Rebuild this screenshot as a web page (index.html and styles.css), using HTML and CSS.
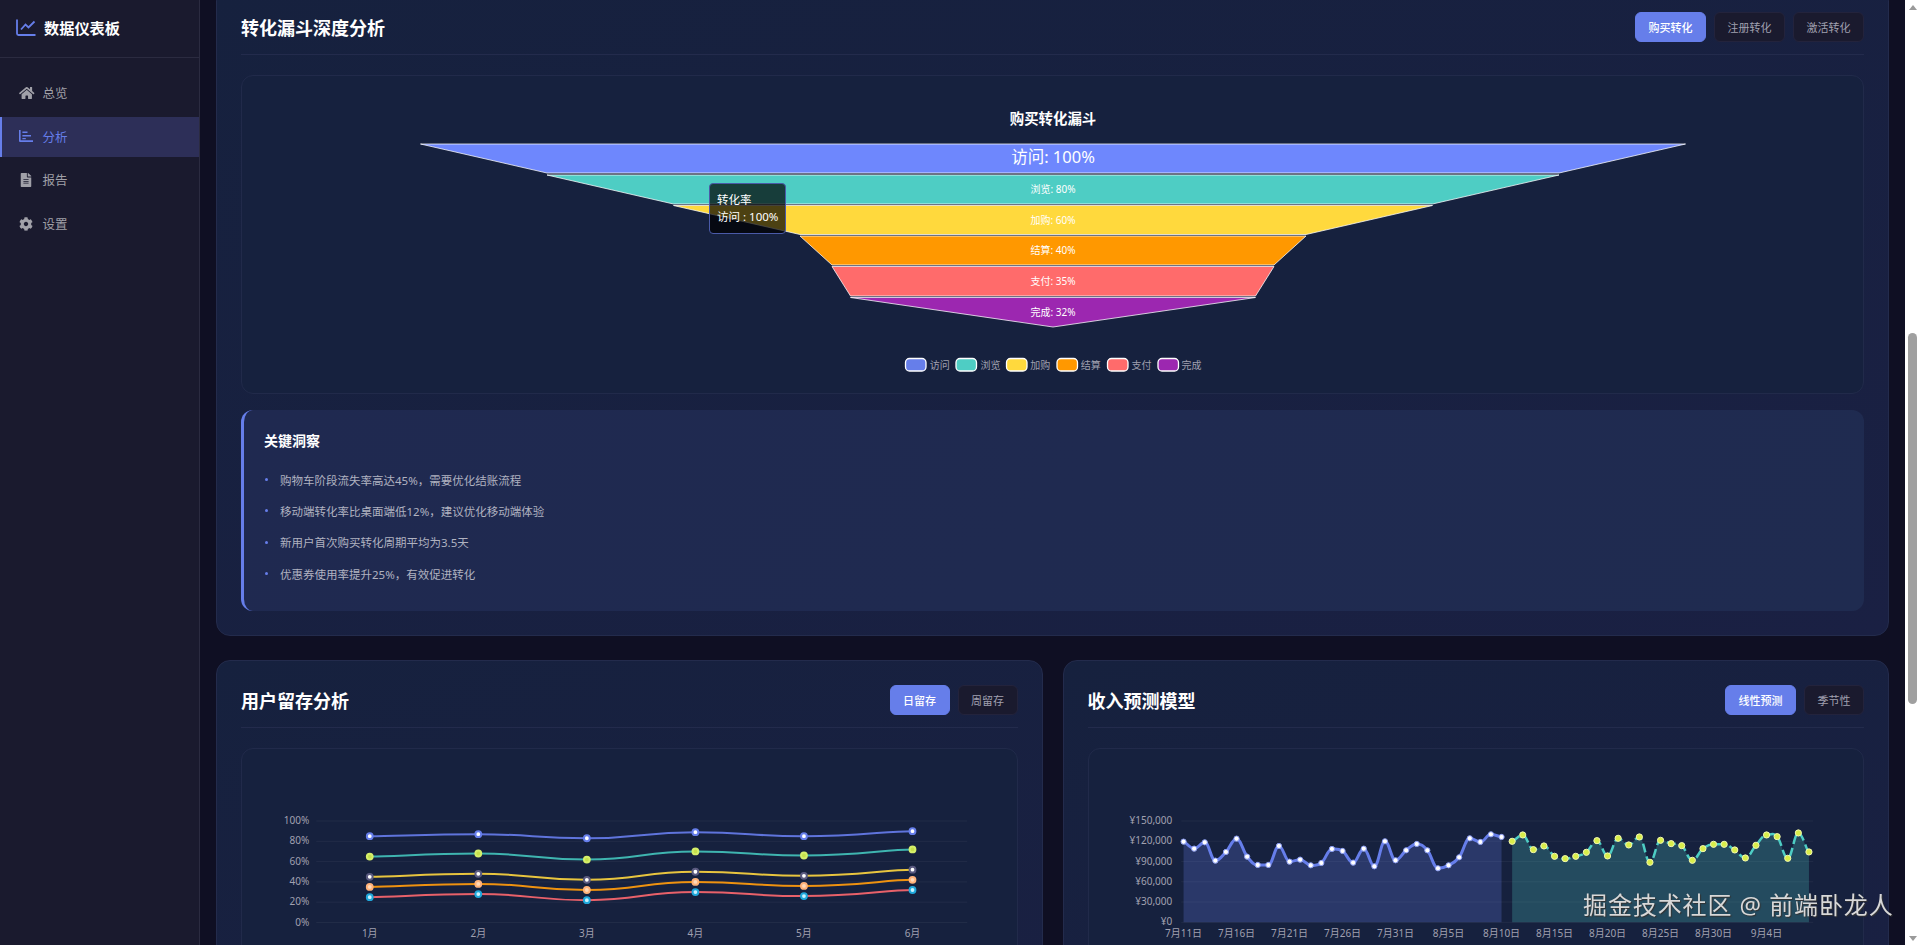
FILE: index.html
```html
<!DOCTYPE html>
<html lang="zh-CN">

<head>
    <meta charset="utf-8">
    <title>数据仪表板</title>
    <link rel="stylesheet" href="styles.css">
</head>

<body>
    <!-- Sidebar -->
    <aside class="sidebar">
        <div class="sidebar-header">
            <svg class="logo-icon" viewBox="0 0 20 17" width="20" height="17">
                <path d="M1 0.5V14.5Q1 16 2.5 16H19.5" />
                <path d="M5 10.5L9.5 5.5L12.5 8.5L18.5 2.5" />
            </svg>
            <span class="logo-text">数据仪表板</span>
        </div>
        <nav class="nav-list">
            <a class="nav-item">
                <svg class="nav-icon home" viewBox="0 0 576 512">
                    <path d="M280.37 148.26L96 300.11V464a16 16 0 0 0 16 16l112.06-.29a16 16 0 0 0 15.92-16V368a16 16 0 0 1 16-16h64a16 16 0 0 1 16 16v95.64a16 16 0 0 0 16 16.05L464 480a16 16 0 0 0 16-16V300L295.67 148.26a12.19 12.19 0 0 0-15.3 0zM571.6 251.47L488 182.56V44.05a12 12 0 0 0-12-12h-56a12 12 0 0 0-12 12v72.61L318.47 43a48 48 0 0 0-61 0L4.34 251.47a12 12 0 0 0-1.6 16.9l25.5 31A12 12 0 0 0 45.15 301l235.22-193.74a12.19 12.19 0 0 1 15.3 0L530.9 301a12 12 0 0 0 16.9-1.6l25.5-31a12 12 0 0 0-1.7-16.93z" />
                </svg>
                <span>总览</span>
            </a>
            <a class="nav-item active">
                <svg class="nav-icon" viewBox="0 0 14 12">
                    <path d="M0 0H1.6V10.2H14V12H1Q0 12 0 11Z" />
                    <path d="M3.4 1.6H8.5V3H3.4ZM3.4 5H12V6.4H3.4ZM3.4 8H6.8V9.2H3.4Z" />
                </svg>
                <span>分析</span>
            </a>
            <a class="nav-item">
                <svg class="nav-icon" viewBox="0 0 384 512">
                    <path d="M224 136V0H24C10.7 0 0 10.7 0 24v464c0 13.3 10.7 24 24 24h336c13.3 0 24-10.7 24-24V160H248c-13.2 0-24-10.8-24-24zm64 236c0 6.6-5.4 12-12 12H108c-6.6 0-12-5.4-12-12v-8c0-6.6 5.4-12 12-12h168c6.6 0 12 5.4 12 12v8zm0-64c0 6.6-5.4 12-12 12H108c-6.6 0-12-5.4-12-12v-8c0-6.6 5.4-12 12-12h168c6.6 0 12 5.4 12 12v8zm0-72v8c0 6.6-5.4 12-12 12H108c-6.6 0-12-5.4-12-12v-8c0-6.6 5.4-12 12-12h168c6.6 0 12 5.4 12 12zm96-114.1v6.1H256V0h6.1c6.4 0 12.5 2.5 17 7l97.9 98c4.5 4.5 7 10.6 7 16.9z" />
                </svg>
                <span>报告</span>
            </a>
            <a class="nav-item">
                <svg class="nav-icon" viewBox="0 0 512 512">
                    <path d="M487.4 315.7l-42.6-24.6c4.3-23.2 4.3-47 0-70.2l42.6-24.6c4.9-2.8 7.1-8.6 5.5-14-11.1-35.6-30-67.8-54.7-94.6-3.8-4.1-10-5.1-14.8-2.3L380.8 110c-17.9-15.4-38.5-27.3-60.8-35.1V25.8c0-5.6-3.9-10.5-9.4-11.7-36.7-8.2-74.3-7.8-109.2 0-5.5 1.2-9.4 6.1-9.4 11.7V75c-22.2 7.9-42.8 19.8-60.8 35.1L88.7 85.5c-4.9-2.8-11-1.9-14.8 2.3-24.7 26.7-43.6 58.9-54.7 94.6-1.7 5.4.6 11.2 5.5 14L67.3 221c-4.3 23.2-4.3 47 0 70.2l-42.6 24.6c-4.9 2.8-7.1 8.6-5.5 14 11.1 35.6 30 67.8 54.7 94.6 3.8 4.1 10 5.1 14.8 2.3l42.6-24.6c17.9 15.4 38.5 27.3 60.8 35.1v49.2c0 5.6 3.9 10.5 9.4 11.7 36.7 8.2 74.3 7.8 109.2 0 5.5-1.2 9.4-6.1 9.4-11.7v-49.2c22.2-7.9 42.8-19.8 60.8-35.1l42.6 24.6c4.9 2.8 11 1.9 14.8-2.3 24.7-26.7 43.6-58.9 54.7-94.6 1.5-5.5-.7-11.3-5.6-14.1zM256 336c-44.1 0-80-35.9-80-80s35.9-80 80-80 80 35.9 80 80-35.9 80-80 80z" />
                </svg>
                <span>设置</span>
            </a>
        </nav>
    </aside>

    <!-- Main content -->
    <main class="main">
        <div class="scroll-area">
            <section class="card">
                <div class="card-header">
                    <h2 class="card-title">转化漏斗深度分析</h2>
                    <div class="btn-group">
                        <button class="btn active">购买转化</button>
                        <button class="btn">注册转化</button>
                        <button class="btn">激活转化</button>
                    </div>
                </div>

                <div class="chart-box">
                    <svg class="chart-svg" viewBox="242 76 1620 317">
                        <text class="funnel-title" x="1052.5" y="118">购买转化漏斗</text>
                        <g class="funnel-rows">
                            <polygon fill="#6e87fd" points="420,144 1685,144 1558.5,173 546.5,173" />
                            <polygon fill="#4ecdc4" points="546.5,175 1558.5,175 1432,204 673,204" />
                            <polygon fill="#ffd93d" points="673,205.5 1432,205.5 1305.5,234.5 799.5,234.5" />
                            <polygon fill="#ff9800" points="799.5,236 1305.5,236 1273.5,265 831.5,265" />
                            <polygon fill="#ff6b6b" points="831.5,266.5 1273.5,266.5 1255,296 850,296" />
                            <polygon fill="#9c27b0" points="850,297.5 1255,297.5 1052.5,327" />
                        </g>
                        <g class="funnel-labels">
                            <text class="big" x="1052.5" y="156">访问: 100%</text>
                            <text x="1052.5" y="188.5">浏览: 80%</text>
                            <text x="1052.5" y="219.5">加购: 60%</text>
                            <text x="1052.5" y="250">结算: 40%</text>
                            <text x="1052.5" y="281">支付: 35%</text>
                            <text x="1052.5" y="311.5">完成: 32%</text>
                        </g>
                        <g class="legend">
                            <rect fill="#667eea" x="905" y="358.5" width="20.5" height="12.5" rx="4" />
                            <text x="929.3" y="365">访问</text>
                            <rect fill="#4ecdc4" x="955.5" y="358.5" width="20.5" height="12.5" rx="4" />
                            <text x="980" y="365">浏览</text>
                            <rect fill="#ffd93d" x="1006" y="358.5" width="20.5" height="12.5" rx="4" />
                            <text x="1029.7" y="365">加购</text>
                            <rect fill="#ff9800" x="1056.5" y="358.5" width="20.5" height="12.5" rx="4" />
                            <text x="1080.3" y="365">结算</text>
                            <rect fill="#ff6b6b" x="1107" y="358.5" width="20.5" height="12.5" rx="4" />
                            <text x="1131" y="365">支付</text>
                            <rect fill="#9c27b0" x="1157.5" y="358.5" width="20.5" height="12.5" rx="4" />
                            <text x="1181" y="365">完成</text>
                        </g>
                    </svg>
                    <div class="chart-tooltip">
                        <div>转化率</div>
                        <div>访问 : 100%</div>
                    </div>
                </div>

                <div class="insights">
                    <h4 class="insights-title">关键洞察</h4>
                    <ul class="insights-list">
                        <li>购物车阶段流失率高达45%，需要优化结账流程</li>
                        <li>移动端转化率比桌面端低12%，建议优化移动端体验</li>
                        <li>新用户首次购买转化周期平均为3.5天</li>
                        <li>优惠券使用率提升25%，有效促进转化</li>
                    </ul>
                </div>
            </section>

            <div class="card-row">
                <section class="card">
                    <div class="card-header">
                        <h2 class="card-title">用户留存分析</h2>
                        <div class="btn-group">
                            <button class="btn active">日留存</button>
                            <button class="btn">周留存</button>
                        </div>
                    </div>
                    <div class="chart-box">
                        <svg class="chart-svg" id="retention-chart" viewBox="242 749 774 317"></svg>
                    </div>
                </section>

                <section class="card">
                    <div class="card-header">
                        <h2 class="card-title">收入预测模型</h2>
                        <div class="btn-group">
                            <button class="btn active">线性预测</button>
                            <button class="btn">季节性</button>
                        </div>
                    </div>
                    <div class="chart-box">
                        <svg class="chart-svg" id="revenue-chart" viewBox="1088 749 774 317"></svg>
                    </div>
                </section>
            </div>
        </div>
    </main>

    <!-- Browser scrollbar, the page is photographed part way down -->
    <div class="scrollbar">
        <div class="scroll-arrow up"></div>
        <div class="scroll-thumb"></div>
        <div class="scroll-arrow down"></div>
    </div>

    <div class="watermark">掘金技术社区 @ 前端卧龙人</div>

    <script src="charts.js"></script>
</body>

</html>
```

FILE: styles.css
```css
* {
    box-sizing: border-box;
}

html,
body {
    margin: 0;
    height: 100%;
    overflow: hidden;
}

body {
    display: flex;
    background-color: #0f0f23;
    font-family: "Noto Sans", "Noto Sans CJK SC", sans-serif;
    color: #fff;
}

/* Sidebar */
.sidebar {
    flex: 0 0 200px;
    background-color: #1a1a2e;
    border-right: 1px solid #2b2b40;
}

.sidebar-header {
    display: flex;
    align-items: center;
    gap: 8px;
    height: 58px;
    padding-left: 16px;
    padding-bottom: 3px;
    border-bottom: 1px solid #2b2b40;
}

.logo-icon {
    fill: none;
    stroke: #667eea;
    stroke-width: 1.8;
}

.logo-text {
    font-size: 15.2px;
    font-weight: 700;
}

.nav-list {
    display: flex;
    flex-direction: column;
    gap: 3.7px;
    padding-top: 15px;
}

.nav-item {
    display: flex;
    align-items: center;
    height: 40px;
    padding-left: 19px;
    padding-bottom: 1px;
    font-size: 12.5px;
    color: #a0a0a8;
}

.nav-item.active {
    padding-left: 17px;
    border-left: 2px solid #667eea;
    background-color: #2d2f58;
    color: #667eea;
}

.nav-icon {
    flex: 0 0 14px;
    height: 14px;
    margin-right: 9.5px;
    fill: currentColor;
}

.nav-icon.home {
    flex-basis: 15.5px;
    margin-right: 8px;
}

/* Main area */
.main {
    flex: 1;
    min-width: 0;
    padding: 0 16px;
    overflow: hidden;
}

.scroll-area {
    margin-top: -13px;
}

.card {
    padding: 24px;
    border: 1px solid #232b4c;
    border-radius: 14px;
    background: linear-gradient(160deg, #16213e, #1a2043);
}

.card-row {
    display: grid;
    grid-template-columns: 1fr 1fr;
    gap: 20px;
    margin-top: 24px;
}

.card-header {
    display: flex;
    align-items: center;
    justify-content: space-between;
    padding-bottom: 12px;
    margin-bottom: 20px;
    border-bottom: 1px solid #232b4c;
}

.card-title {
    margin: 0;
    font-size: 18px;
    font-weight: 700;
}

.btn-group {
    display: flex;
    gap: 8px;
}

.btn {
    height: 30px;
    padding: 0 12.5px;
    border: 1px solid #23233c;
    border-radius: 6px;
    background-color: #1a1a2e;
    font-family: inherit;
    font-size: 11px;
    color: #a0a0b0;
}

.btn.active {
    border-color: #667eea;
    background-color: #667eea;
    font-weight: 500;
    color: #fff;
}

/* Chart panels */
.chart-box {
    position: relative;
    height: 319px;
    border: 1px solid #212a4a;
    border-radius: 12px;
    background-color: #16213e;
}

.chart-svg {
    display: block;
    width: 100%;
    height: 100%;
}

.chart-svg text {
    dominant-baseline: central;
}

.funnel-title {
    font-size: 14.4px;
    font-weight: 700;
    fill: #fff;
    text-anchor: middle;
}

.funnel-rows polygon {
    stroke: rgba(255, 255, 255, 0.75);
    stroke-width: 1;
}

.funnel-labels text {
    font-size: 10px;
    fill: #fff;
    text-anchor: middle;
}

.funnel-labels .big {
    font-size: 16.5px;
}

.legend rect {
    stroke: #fff;
    stroke-width: 1.3;
}

.legend text {
    font-size: 10px;
    fill: #a0a0b0;
}

.chart-tooltip {
    position: absolute;
    left: 467px;
    top: 107px;
    width: 77px;
    height: 51px;
    padding: 7px;
    border: 1px solid #4a5aa8;
    border-radius: 4px;
    background-color: rgba(0, 0, 0, 0.7);
    font-size: 11.5px;
    line-height: 17px;
    white-space: nowrap;
}

/* Drawn by charts.js */
.grid-line {
    stroke: rgba(255, 255, 255, 0.05);
    stroke-width: 1;
}

.axis-label {
    font-size: 10px;
    fill: #a0a0b0;
}

.axis-label.y {
    text-anchor: end;
}

.axis-label.x {
    text-anchor: middle;
}

.series-line {
    fill: none;
    stroke-width: 2;
}

/* Insights */
.insights {
    margin-top: 16px;
    padding: 20px 20px 21.5px;
    border-left: 3px solid #667eea;
    border-radius: 12px;
    background: linear-gradient(135deg, #1f2950, #1f2b50);
}

.insights-title {
    margin: 0 0 13px;
    font-size: 14px;
    font-weight: 700;
    line-height: 21px;
}

.insights-list {
    margin: 0;
    padding: 0;
    list-style: none;
}

.insights-list li {
    display: flex;
    align-items: center;
    height: 31.3px;
    font-size: 11.5px;
    color: #b0b2c0;
}

.insights-list li::before {
    content: "";
    flex: 0 0 3px;
    height: 3px;
    margin: 0 12px 0 1px;
    border-radius: 50%;
    background-color: #667eea;
}

/* Scrollbar */
.scrollbar {
    flex: 0 0 15px;
    display: flex;
    flex-direction: column;
    align-items: center;
    padding: 5px 0 4px;
    background-color: #fff;
}

.scroll-arrow {
    width: 0;
    height: 0;
    border-left: 4.5px solid transparent;
    border-right: 4.5px solid transparent;
}

.scroll-arrow.up {
    border-bottom: 5px solid #9a9a9a;
}

.scroll-arrow.down {
    margin-top: auto;
    border-top: 5px solid #9a9a9a;
}

.scroll-thumb {
    width: 9px;
    height: 371px;
    margin-top: 323px;
    border-radius: 5px;
    background-color: #a0a0a0;
}

.watermark {
    position: fixed;
    left: 1583px;
    top: 887px;
    font-size: 24px;
    line-height: 36px;
    letter-spacing: 0.9px;
    white-space: nowrap;
    color: #d8d8d8;
    text-shadow: 1px 1px 1px #333;
}
```

FILE: charts.js
```javascript
const SVG_NS = "http://www.w3.org/2000/svg";

function add(parent, tag, attrs, text) {
    const el = document.createElementNS(SVG_NS, tag);
    for (const key in attrs) {
        el.setAttribute(key, attrs[key]);
    }
    if (text) {
        el.textContent = text;
    }
    parent.appendChild(el);
    return el;
}

// Smooth line through the points, flat at local peaks like the chart library does
function smoothPath(points, smooth) {
    const tangents = points.map((p, i) => {
        const prev = points[Math.max(i - 1, 0)];
        const next = points[Math.min(i + 1, points.length - 1)];
        const flat = (p[1] - prev[1]) * (next[1] - p[1]) <= 0;
        return [(next[0] - prev[0]) * smooth, flat ? 0 : (next[1] - prev[1]) * smooth];
    });
    let d = "M" + points[0][0] + " " + points[0][1];
    for (let i = 1; i < points.length; i++) {
        const a = points[i - 1];
        const b = points[i];
        d += " C" + (a[0] + tangents[i - 1][0]) + " " + (a[1] + tangents[i - 1][1]) +
            " " + (b[0] - tangents[i][0]) + " " + (b[1] - tangents[i][1]) +
            " " + b[0] + " " + b[1];
    }
    return d;
}

// Retention chart
function drawRetention() {
    const svg = document.querySelector("#retention-chart");
    const y0 = 922.5;
    const unit = 1.015;
    const months = ["1月", "2月", "3月", "4月", "5月", "6月"];
    const series = [
        { line: "#5f74dc", ring: "#667eea", dot: "#fff", data: [85, 87, 83, 89, 85, 90] },
        { line: "#3fb5b0", ring: "#d5ef6a", dot: "#c6e04c", data: [65, 68, 62, 70, 66, 72] },
        { line: "#e8c53f", ring: "#5a5a80", dot: "#fff", data: [45, 48, 42, 50, 46, 52] },
        { line: "#ee9210", ring: "#ffb27a", dot: "#ffd9b8", data: [35, 38, 32, 40, 36, 42] },
        { line: "#e8616a", ring: "#1fa8dc", dot: "#c8f2ff", data: [25, 28, 22, 30, 26, 32] }
    ];

    for (let v = 0; v <= 100; v += 20) {
        const y = y0 - v * unit;
        add(svg, "line", { class: "grid-line", x1: 316, x2: 967, y1: y, y2: y });
        add(svg, "text", { class: "axis-label y", x: 309, y: y - 1 }, v + "%");
    }
    months.forEach((m, i) => {
        add(svg, "text", { class: "axis-label x", x: 369.5 + i * 108.55, y: 933 }, m);
    });
    series.forEach((s) => {
        const points = s.data.map((v, i) => [369.5 + i * 108.55, y0 - v * unit]);
        add(svg, "path", { class: "series-line", d: smoothPath(points, 0.25), stroke: s.line });
        points.forEach((p) => {
            add(svg, "circle", { cx: p[0], cy: p[1], r: 2.9, fill: s.dot, stroke: s.ring, "stroke-width": 2 });
        });
    });
}

// Revenue chart: actual values, then the forecast after the gap
function drawRevenue() {
    const svg = document.querySelector("#revenue-chart");
    const y0 = 922.3;
    const scale = 101.3 / 150000;
    const x0 = 1182.3;
    const step = 10.6;
    const actual = [119450, 109080, 118460, 91300, 104150, 123900, 97240, 84900, 84900, 113030,
        89800, 92800, 84400, 87860, 108600, 105630, 88350, 109080, 82900, 119950,
        91800, 106600, 116000, 106600, 79960, 84400, 96250, 124400, 118960, 130300, 126360];
    const forecast = [119945, 129320, 107600, 113030, 97730, 94280, 97730, 103650, 120930, 98230,
        124390, 114500, 126360, 88850, 121430, 116490, 113530, 91810, 109080, 115500,
        115500, 107110, 95260, 114020, 129320, 126850, 94770, 132280, 104150];

    for (let v = 0; v <= 150000; v += 30000) {
        const y = y0 - v * scale;
        add(svg, "line", { class: "grid-line", x1: 1180, x2: 1812, y1: y, y2: y });
        add(svg, "text", { class: "axis-label y", x: 1171, y: y - 1 }, "¥" + v.toLocaleString("en-US"));
    }

    // Label every fifth day starting from 7月11日
    for (let i = 0; i < 60; i += 5) {
        const day = new Date(2024, 6, 11 + i);
        const label = (day.getMonth() + 1) + "月" + day.getDate() + "日";
        add(svg, "text", { class: "axis-label x", x: x0 + i * step, y: 933 }, label);
    }

    const parts = [
        { data: actual, offset: 0, area: "rgba(102, 126, 234, 0.25)", line: "#667eea", dot: "#fff", ring: "#8a9cf2", dash: "none", r: 2.6, width: 3 },
        { data: forecast, offset: 31, area: "rgba(78, 205, 196, 0.25)", line: "#4ecdc4", dot: "#d9ee4a", ring: "#f2f7b0", dash: "9 4", r: 3.1, width: 2.5 }
    ];
    parts.forEach((part) => {
        const points = part.data.map((v, i) => [x0 + (part.offset + i) * step, y0 - v * scale]);
        const d = smoothPath(points, 0.2);
        const first = points[0][0];
        const last = points[points.length - 1][0];
        add(svg, "path", { d: d + " L" + last + " " + y0 + " L" + first + " " + y0 + " Z", fill: part.area });
        add(svg, "path", { d: d, fill: "none", stroke: part.line, "stroke-width": part.width, "stroke-dasharray": part.dash });
        points.forEach((p) => {
            add(svg, "circle", { cx: p[0], cy: p[1], r: part.r, fill: part.dot, stroke: part.ring, "stroke-width": 1 });
        });
    });
}

drawRetention();
drawRevenue();
```
